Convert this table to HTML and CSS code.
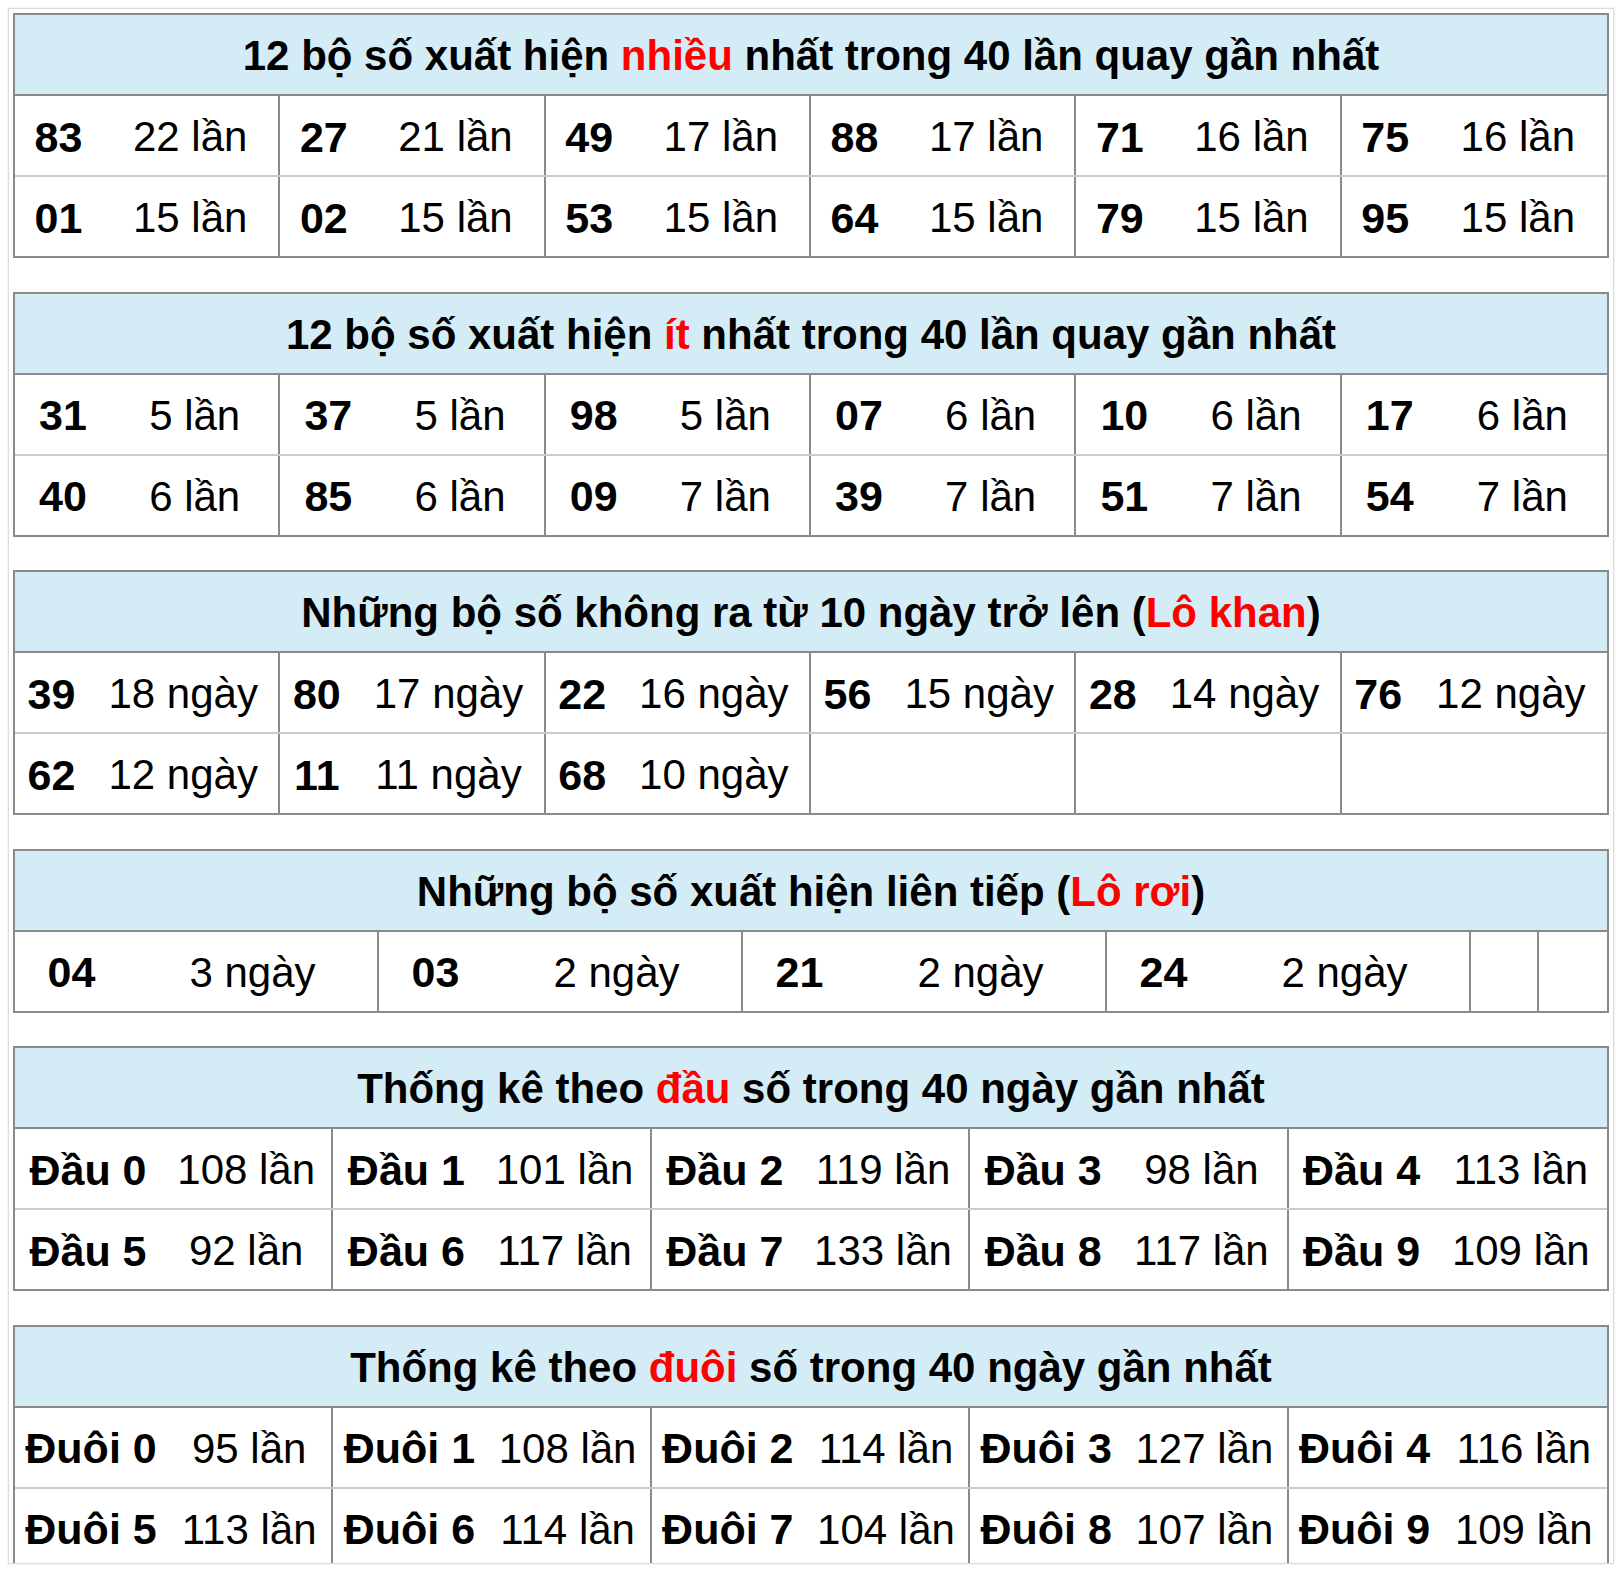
FILE: index.html
```html
<!DOCTYPE html>
<html lang="vi">
<head>
<meta charset="utf-8">
<title>Thống kê lô tô</title>
<link rel="stylesheet" href="styles.css">
</head>
<body>
<div class="wrap">

  <section class="tbl t1">
    <div class="hd">12 bộ số xuất hiện <span class="red">nhiều</span> nhất trong 40 lần quay gần nhất</div>
    <div class="row">
      <div class="n">83</div><div class="c">22 lần</div>
      <div class="n">27</div><div class="c">21 lần</div>
      <div class="n">49</div><div class="c">17 lần</div>
      <div class="n">88</div><div class="c">17 lần</div>
      <div class="n">71</div><div class="c">16 lần</div>
      <div class="n">75</div><div class="c">16 lần</div>
    </div>
    <div class="row">
      <div class="n">01</div><div class="c">15 lần</div>
      <div class="n">02</div><div class="c">15 lần</div>
      <div class="n">53</div><div class="c">15 lần</div>
      <div class="n">64</div><div class="c">15 lần</div>
      <div class="n">79</div><div class="c">15 lần</div>
      <div class="n">95</div><div class="c">15 lần</div>
    </div>
  </section>

  <section class="tbl t2">
    <div class="hd">12 bộ số xuất hiện <span class="red">ít</span> nhất trong 40 lần quay gần nhất</div>
    <div class="row">
      <div class="n">31</div><div class="c">5 lần</div>
      <div class="n">37</div><div class="c">5 lần</div>
      <div class="n">98</div><div class="c">5 lần</div>
      <div class="n">07</div><div class="c">6 lần</div>
      <div class="n">10</div><div class="c">6 lần</div>
      <div class="n">17</div><div class="c">6 lần</div>
    </div>
    <div class="row">
      <div class="n">40</div><div class="c">6 lần</div>
      <div class="n">85</div><div class="c">6 lần</div>
      <div class="n">09</div><div class="c">7 lần</div>
      <div class="n">39</div><div class="c">7 lần</div>
      <div class="n">51</div><div class="c">7 lần</div>
      <div class="n">54</div><div class="c">7 lần</div>
    </div>
  </section>

  <section class="tbl t3">
    <div class="hd">Những bộ số không ra từ 10 ngày trở lên (<span class="red">Lô khan</span>)</div>
    <div class="row">
      <div class="n">39</div><div class="c">18 ngày</div>
      <div class="n">80</div><div class="c">17 ngày</div>
      <div class="n">22</div><div class="c">16 ngày</div>
      <div class="n">56</div><div class="c">15 ngày</div>
      <div class="n">28</div><div class="c">14 ngày</div>
      <div class="n">76</div><div class="c">12 ngày</div>
    </div>
    <div class="row">
      <div class="n">62</div><div class="c">12 ngày</div>
      <div class="n">11</div><div class="c">11 ngày</div>
      <div class="n">68</div><div class="c">10 ngày</div>
      <div class="n"></div><div class="c"></div>
      <div class="n"></div><div class="c"></div>
      <div class="n"></div><div class="c"></div>
    </div>
  </section>

  <section class="tbl t4">
    <div class="hd">Những bộ số xuất hiện liên tiếp (<span class="red">Lô rơi</span>)</div>
    <div class="row">
      <div class="n">04</div><div class="c">3 ngày</div>
      <div class="n">03</div><div class="c">2 ngày</div>
      <div class="n">21</div><div class="c">2 ngày</div>
      <div class="n">24</div><div class="c">2 ngày</div>
      <div class="c"></div>
      <div class="c"></div>
    </div>
  </section>

  <section class="tbl t5">
    <div class="hd">Thống kê theo <span class="red">đầu</span> số trong 40 ngày gần nhất</div>
    <div class="row">
      <div class="n">Đầu 0</div><div class="c">108 lần</div>
      <div class="n">Đầu 1</div><div class="c">101 lần</div>
      <div class="n">Đầu 2</div><div class="c">119 lần</div>
      <div class="n">Đầu 3</div><div class="c">98 lần</div>
      <div class="n">Đầu 4</div><div class="c">113 lần</div>
    </div>
    <div class="row">
      <div class="n">Đầu 5</div><div class="c">92 lần</div>
      <div class="n">Đầu 6</div><div class="c">117 lần</div>
      <div class="n">Đầu 7</div><div class="c">133 lần</div>
      <div class="n">Đầu 8</div><div class="c">117 lần</div>
      <div class="n">Đầu 9</div><div class="c">109 lần</div>
    </div>
  </section>

  <section class="tbl t6">
    <div class="hd">Thống kê theo <span class="red">đuôi</span> số trong 40 ngày gần nhất</div>
    <div class="row">
      <div class="n">Đuôi 0</div><div class="c">95 lần</div>
      <div class="n">Đuôi 1</div><div class="c">108 lần</div>
      <div class="n">Đuôi 2</div><div class="c">114 lần</div>
      <div class="n">Đuôi 3</div><div class="c">127 lần</div>
      <div class="n">Đuôi 4</div><div class="c">116 lần</div>
    </div>
    <div class="row">
      <div class="n">Đuôi 5</div><div class="c">113 lần</div>
      <div class="n">Đuôi 6</div><div class="c">114 lần</div>
      <div class="n">Đuôi 7</div><div class="c">104 lần</div>
      <div class="n">Đuôi 8</div><div class="c">107 lần</div>
      <div class="n">Đuôi 9</div><div class="c">109 lần</div>
    </div>
  </section>

</div>
</body>
</html>
```
FILE: styles.css
```css
html, body {
  margin: 0;
  padding: 0;
  background: #ffffff;
}

body {
  font-family: "Liberation Sans", Arial, Helvetica, sans-serif;
  color: #000;
}

.wrap {
  margin: 8px;
  width: 1606px;
  height: 1556px;
  box-sizing: border-box;
  border: 1px solid #dcdcdc;
  box-shadow: 0 0 2px rgba(0, 0, 0, 0.12);
  padding: 4px;
  overflow: hidden;
  background: #fff;
}

.tbl {
  border: 2px solid #8a8a8a;
  margin-bottom: 33.5px;
}

.hd {
  height: 77px;
  padding-top: 2px;
  box-sizing: content-box;
  line-height: 77px;
  background: #d4ecf6;
  border-bottom: 2px solid #8a8a8a;
  text-align: center;
  font-weight: bold;
  font-size: 42px;
  white-space: nowrap;
}

.red {
  color: #ff0000;
}

.row {
  display: grid;
  height: 79px;
}

.row + .row {
  border-top: 2px solid #cccccc;
}

.row > div {
  display: flex;
  align-items: center;
  justify-content: center;
  padding-top: 3px;
  box-sizing: border-box;
  font-size: 42px;
  white-space: nowrap;
  min-width: 0;
}

.row > .n {
  font-weight: bold;
  font-size: 43px;
}

.row > .c {
  border-right: 2px solid #8a8a8a;
}

.row > .c:last-child {
  border-right: none;
}

.t1 .row { grid-template-columns: repeat(6, 87px 1fr); }
.t2 .row { grid-template-columns: repeat(6, 96px 1fr); }
.t3 .row { grid-template-columns: repeat(6, 73px 1fr); }
.t4 .row { grid-template-columns: repeat(4, 113px 251px) 68px 1fr; }
.t5 .row { grid-template-columns: repeat(5, 146px 1fr); }
.t6 .row { grid-template-columns: repeat(5, 152px 1fr); }
```
